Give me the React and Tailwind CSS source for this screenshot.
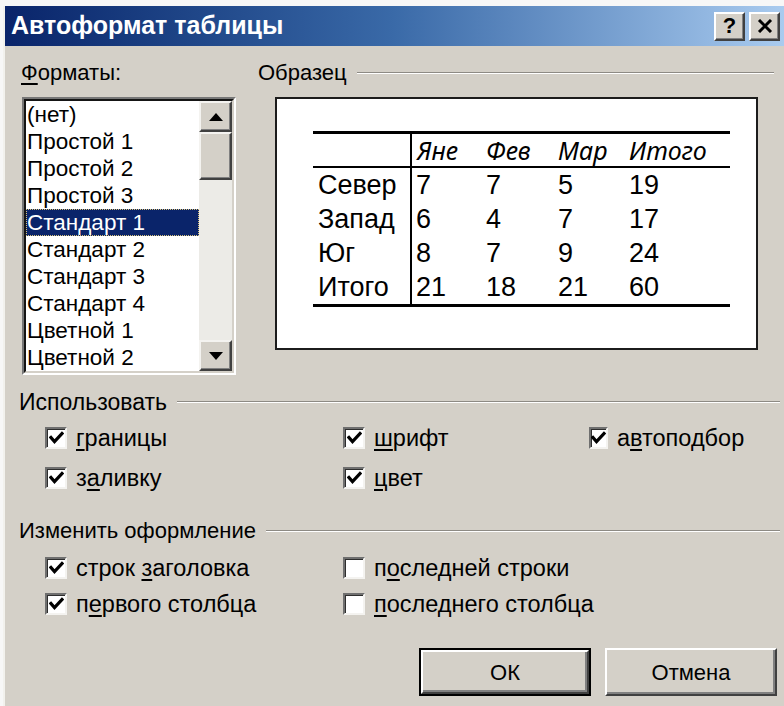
import React from "react";

const formats = [
  "(нет)",
  "Простой 1",
  "Простой 2",
  "Простой 3",
  "Стандарт 1",
  "Стандарт 2",
  "Стандарт 3",
  "Стандарт 4",
  "Цветной 1",
  "Цветной 2",
];

const rows = [
  ["Север", "7", "7", "5", "19"],
  ["Запад", "6", "4", "7", "17"],
  ["Юг", "8", "7", "9", "24"],
  ["Итого", "21", "18", "21", "60"],
];

const U = ({ children }) => <span className="underline underline-offset-[3px] decoration-[1.5px]">{children}</span>;

function Check({ checked, children }) {
  return (
    <div className="flex items-center gap-[9px]">
      <div className="w-[22px] h-[22px] bg-white border-t-2 border-l-2 border-[#6f6f6f] border-b-2 border-r-2 border-b-[#f4f3f0] border-r-[#f4f3f0] shadow-[inset_1px_1px_0_#2e2e2e] flex items-center justify-center">
        {checked && (
          <svg width="15" height="14" viewBox="0 0 15 14">
            <path d="M2 6.5 L5.5 10.5 L13 2.5" fill="none" stroke="#000" strokeWidth="3.2" strokeLinecap="square" />
          </svg>
        )}
      </div>
      <span className="text-[23.5px] leading-[26px] text-black whitespace-nowrap">{children}</span>
    </div>
  );
}

function GroupTitle({ children, size }) {
  return (
    <div className="flex items-center h-[26px]">
      <span className={"leading-[26px] whitespace-nowrap " + size}>{children}</span>
      <div className="flex-1 ml-[10px] border-t border-[#8d8a84] border-b border-b-white h-[2px]" />
    </div>
  );
}

function SysButton({ children }) {
  return (
    <div className="w-[31px] h-[29px] bg-[#d4d0c8] border-t-2 border-l-2 border-white border-b-2 border-r-2 border-b-[#404040] border-r-[#404040] shadow-[inset_-1px_-1px_0_#808080] flex items-center justify-center text-[22px] font-bold leading-none text-black">
      {children}
    </div>
  );
}

function DlgButton({ primary, children }) {
  return (
    <div className={primary ? "border-2 border-black" : ""}>
      <div
        className={
          "bg-[#d4d0c8] border-t-2 border-l-2 border-white border-b-2 border-r-2 border-b-[#404040] border-r-[#404040] shadow-[inset_-2px_-2px_0_#808080] flex items-center justify-center text-[22px] " +
          (primary ? "w-[168px] h-[44px]" : "w-[172px] h-[48px]")
        }
      >
        {children}
      </div>
    </div>
  );
}

function ScrollArrow({ up }) {
  return (
    <div className="h-[31px] bg-[#d4d0c8] border-t-2 border-l-2 border-[#f4f3f0] border-b-2 border-r-2 border-b-[#404040] border-r-[#404040] shadow-[inset_-1px_-1px_0_#808080] flex items-center justify-center">
      <svg width="14" height="8" viewBox="0 0 14 8">
        {up ? <path d="M0 8 L7 0 L14 8 Z" fill="#000" /> : <path d="M0 0 L7 8 L14 0 Z" fill="#000" />}
      </svg>
    </div>
  );
}

export default function App() {
  return (
    <div className="w-[784px] h-[706px] bg-[#f7f7f7] overflow-hidden pt-[6px] pl-[3px] text-black" style={{ fontFamily: '"Liberation Sans", Arial, sans-serif' }}>
      <div className="h-[700px] bg-[#d4d0c8] border-l-2 border-[#f2f1ed]">
        {/* title bar */}
        <div className="h-[40px] flex items-center pl-[6px] pr-[4px] bg-gradient-to-r from-[#0a246a] via-[#3a6aa8] to-[#a9cbef]">
          <span className="text-white font-bold text-[25px]">Автоформат таблицы</span>
          <div className="ml-auto flex gap-[4px]">
            <SysButton>?</SysButton>
            <SysButton>
              <svg width="16" height="14" viewBox="0 0 16 14">
                <path d="M2 1 L14 13 M14 1 L2 13" stroke="#000" strokeWidth="3" />
              </svg>
            </SysButton>
          </div>
        </div>

        {/* top section */}
        <div className="flex mt-[14px]">
          <div className="ml-[15px] w-[216px]">
            <div className="text-[22px] leading-[26px] pl-[1px]">
              <U>Ф</U>орматы:
            </div>
            <div className="mt-[11px] ml-[2px] h-[278px] border-t-2 border-l-2 border-[#777] border-b-2 border-r-2 border-b-white border-r-white">
              <div className="h-full flex border-t-2 border-l-2 border-[#151515] border-b-2 border-r-2 border-b-[#d4d0c8] border-r-[#d4d0c8]">
                <div className="flex-1 bg-white overflow-hidden">
                  {formats.map((f, i) => (
                    <div
                      key={f}
                      className={
                        "h-[27px] leading-[25px] text-[22.5px] pl-[0px] whitespace-nowrap " +
                        (i === 4 ? "bg-[#0a246a] text-white border border-dotted border-[#d8c27a]" : "border border-transparent")
                      }
                    >
                      {f}
                    </div>
                  ))}
                </div>
                <div className="w-[33px] flex flex-col">
                  <ScrollArrow up />
                  <div className="h-[48px] bg-[#d4d0c8] border-t-2 border-l-2 border-[#f4f3f0] border-b-2 border-r-2 border-b-[#404040] border-r-[#404040] shadow-[inset_-1px_-1px_0_#808080]" />
                  <div className="flex-1 bg-[#ecebe7]" />
                  <ScrollArrow />
                </div>
              </div>
            </div>
          </div>

          <div className="ml-[22px] w-[516px]">
            <GroupTitle size="text-[22px]">Образец</GroupTitle>
            <div className="mt-[11px] ml-[17px] w-[483px] h-[253px] bg-white border-2 border-[#1c1c1c] pt-[32px] pl-[36px]">
              <div className="w-[417px] border-t-[3px] border-b-[3px] border-black text-[27px]">
                <div className="grid grid-cols-[99px_70px_72px_71px_105px] h-[34px] border-b-2 border-black items-center italic" style={{ fontFamily: '"Noto Sans", "Open Sans", sans-serif' }}>
                  <div className="h-full border-r-2 border-black" />
                  <div className="pl-[5px] leading-none text-[25px]">Яне</div>
                  <div className="pl-[4px] leading-none text-[25px]">Фев</div>
                  <div className="pl-[4px] leading-none text-[25px]">Мар</div>
                  <div className="pl-[4px] leading-none text-[25px]">Итого</div>
                </div>
                {rows.map((r) => (
                  <div key={r[0]} className="grid grid-cols-[99px_70px_72px_71px_105px] h-[34px] items-center">
                    <div className="h-full border-r-2 border-black pl-[5px] leading-[34px]">{r[0]}</div>
                    {r.slice(1).map((v, j) => (
                      <div key={j} className="pl-[4px] leading-[34px]">{v}</div>
                    ))}
                  </div>
                ))}
              </div>
            </div>
          </div>
        </div>

        {/* Использовать */}
        <div className="mt-[14px] ml-[14px] mr-[4px]">
          <GroupTitle size="text-[23px]">Использовать</GroupTitle>
        </div>
        <div className="mt-[3px] ml-[40px] grid grid-cols-[298px_246px_150px] grid-rows-[40px_40px] items-center">
          <Check checked>
            <U>г</U>раницы
          </Check>
          <Check checked>
            <U>ш</U>рифт
          </Check>
          <Check checked>
            а<U>в</U>топодбор
          </Check>
          <Check checked>
            з<U>а</U>ливку
          </Check>
          <Check checked>
            <U>ц</U>вет
          </Check>
          <div />
        </div>

        {/* Изменить оформление */}
        <div className="mt-[20px] ml-[14px] mr-[4px]">
          <GroupTitle size="text-[22px]">Изменить оформление</GroupTitle>
        </div>
        <div className="mt-[6px] ml-[40px] grid grid-cols-[298px_300px] grid-rows-[36px_36px] items-center">
          <Check checked>
            строк <U>з</U>аголовка
          </Check>
          <Check>
            п<U>о</U>следней строки
          </Check>
          <Check checked>
            п<U>е</U>рвого столбца
          </Check>
          <Check>
            <U>п</U>оследнего столбца
          </Check>
        </div>

        {/* buttons */}
        <div className="mt-[26px] ml-[414px] flex gap-[14px]">
          <DlgButton primary>ОК</DlgButton>
          <DlgButton>Отмена</DlgButton>
        </div>
      </div>
    </div>
  );
}
